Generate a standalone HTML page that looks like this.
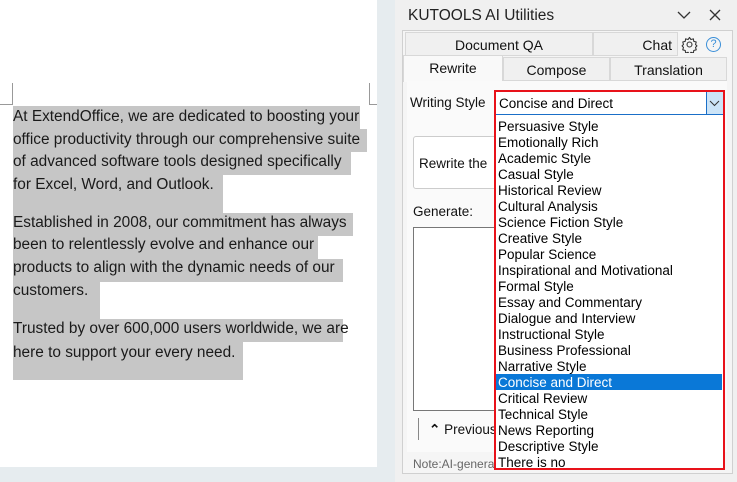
<!DOCTYPE html>
<html><head><style>
*{margin:0;padding:0;box-sizing:border-box}
body{width:737px;height:482px;overflow:hidden;background:#fff;font-family:"Liberation Sans",sans-serif;position:relative}
.a{position:absolute}
.hl{position:absolute;left:13px;background:#c6c6c6;height:23px}
.ln{position:absolute;left:13px;font-size:15.4px;color:#1a1a1a;white-space:nowrap;line-height:23px}
.it{position:absolute;left:2px;font-size:13.5px;line-height:17px;height:16px;color:#000;white-space:nowrap;width:226px;padding-left:2px}
</style></head><body>
<div class="a" style="left:377px;top:0;width:18px;height:482px;background:#e6ecef"></div>
<div class="a" style="left:0;top:467px;width:377px;height:15px;background:#e6ecef"></div>
<div class="a" style="left:12px;top:83px;width:1px;height:22px;background:#999"></div>
<div class="a" style="left:0;top:104px;width:12px;height:1px;background:#999"></div>
<div class="a" style="left:369px;top:83px;width:1px;height:22px;background:#999"></div>
<div class="a" style="left:369px;top:104px;width:8px;height:1px;background:#999"></div>
<div class="hl" style="top:106px;width:347px"></div>
<div class="hl" style="top:129px;width:354px"></div>
<div class="hl" style="top:152px;width:338px"></div>
<div class="hl" style="top:175px;width:210px;height:38px"></div>
<div class="hl" style="top:213px;width:340px"></div>
<div class="hl" style="top:236px;width:305px"></div>
<div class="hl" style="top:259px;width:330px"></div>
<div class="hl" style="top:282px;width:87px;height:37px"></div>
<div class="hl" style="top:319px;width:330px"></div>
<div class="hl" style="top:342px;width:230px;height:38px"></div>
<div class="ln" style="top:105px">At ExtendOffice, we are dedicated to boosting your</div>
<div class="ln" style="top:128px">office productivity through our comprehensive suite</div>
<div class="ln" style="top:150px">of advanced software tools designed specifically</div>
<div class="ln" style="top:173px">for Excel, Word, and Outlook.</div>
<div class="ln" style="top:211px">Established in 2008, our commitment has always</div>
<div class="ln" style="top:233px">been to relentlessly evolve and enhance our</div>
<div class="ln" style="top:256px">products to align with the dynamic needs of our</div>
<div class="ln" style="top:279px">customers.</div>
<div class="ln" style="top:317px">Trusted by over 600,000 users worldwide, we are</div>
<div class="ln" style="top:341px">here to support your every need.</div>

<div class="a" style="left:395px;top:0;width:342px;height:482px;background:#f0f0f0"></div>
<div class="a" style="left:408px;top:7px;font-size:15.5px;color:#222">KUTOOLS AI Utilities</div>
<svg class="a" style="left:677px;top:10px" width="14" height="10"><path d="M1 2l6 6 6-6" stroke="#333" fill="none" stroke-width="1.3"/></svg>
<svg class="a" style="left:709px;top:9px" width="12" height="12"><path d="M1 1l10 10M11 1L1 11" stroke="#333" stroke-width="1.3"/></svg>
<div class="a" style="left:402px;top:30px;width:331px;height:444px;border:1px solid #d0d0d0;background:#f5f5f5"></div>
<div class="a" style="left:405px;top:32px;width:188px;height:24px;border:1px solid #d8d8d8;background:#f0f0f0;font-size:14px;text-align:center;line-height:24px;color:#111">Document QA</div>
<div class="a" style="left:593px;top:32px;width:85px;height:24px;border:1px solid #d8d8d8;background:#f0f0f0;font-size:14px;text-align:right;padding-right:5px;line-height:24px;color:#111">Chat</div>
<svg class="a" style="left:681px;top:36px" width="17" height="17" viewBox="0 0 24 24"><path d="M12 2l2 3 3.5-1 .5 3.5 3.5 1-1 3.5 2 2-2 2 1 3.5-3.5 1-.5 3.5-3.5-1-2 3-2-3-3.5 1-.5-3.5-3.5-1 1-3.5-2-2 2-2-1-3.5 3.5-1 .5-3.5 3.5 1z" fill="none" stroke="#333" stroke-width="1.5" stroke-linejoin="round"/><circle cx="12" cy="12" r="3.5" fill="none" stroke="#333" stroke-width="1.5"/></svg>
<div class="a" style="left:706px;top:37px;width:15px;height:15px;border:1.3px solid #3a8fd8;border-radius:50%;font-size:11px;color:#3a8fd8;text-align:center;line-height:13px">?</div>
<div class="a" style="left:403px;top:55px;width:100px;height:27px;border:1px solid #d8d8d8;border-bottom:none;background:#f9f9f9;font-size:14px;text-align:center;line-height:24px;color:#111">Rewrite</div>
<div class="a" style="left:503px;top:57px;width:107px;height:24px;border:1px solid #d8d8d8;background:#f0f0f0;font-size:14px;text-align:center;line-height:24px;color:#111">Compose</div>
<div class="a" style="left:610px;top:57px;width:117px;height:24px;border:1px solid #d8d8d8;background:#f0f0f0;font-size:14px;text-align:center;line-height:24px;color:#111">Translation</div>
<div class="a" style="left:407px;top:81px;width:320px;height:371px;background:#fafafa"></div>
<div class="a" style="left:410px;top:95px;font-size:13.5px;color:#111">Writing Style</div>
<div class="a" style="left:413px;top:136px;width:90px;height:53px;border:1px solid #ccc;border-radius:3px;background:#fff"></div>
<div class="a" style="left:419px;top:156px;font-size:13.5px;color:#111">Rewrite the</div>
<div class="a" style="left:413px;top:204px;font-size:13.5px;color:#111">Generate:</div>
<div class="a" style="left:413px;top:227px;width:90px;height:184px;border:1px solid #777;background:#fff"></div>
<div class="a" style="left:418px;top:418px;width:1px;height:22px;background:#888"></div>
<div class="a" style="left:429px;top:422px;font-size:13.5px;color:#111"><b>⌃</b> Previous</div>
<div class="a" style="left:413px;top:457px;font-size:12px;color:#666">Note:AI-generated</div>

<div class="a" style="left:494px;top:90px;width:231px;height:380px;border:2px solid #e8121a;background:#fff"></div>
<div class="a" style="left:496px;top:92px;width:227px;height:23px;border-bottom:1px solid #1a6fc8;background:#fff"></div>
<div class="a" style="left:499px;top:96px;font-size:13.5px;color:#000">Concise and Direct</div>
<div class="a" style="left:706px;top:92px;width:17px;height:22px;background:#cce4f7;border-left:1px solid #1a6fc8"></div>
<svg class="a" style="left:709px;top:100px" width="11" height="7"><path d="M1 1l4.5 4.5L10 1" stroke="#333" fill="none"/></svg>
<div class="a" style="left:494px;top:118px;width:231px;height:352px">
<div class="it" style="top:0">Persuasive Style</div>
<div class="it" style="top:16px">Emotionally Rich</div>
<div class="it" style="top:32px">Academic Style</div>
<div class="it" style="top:48px">Casual Style</div>
<div class="it" style="top:64px">Historical Review</div>
<div class="it" style="top:80px">Cultural Analysis</div>
<div class="it" style="top:96px">Science Fiction Style</div>
<div class="it" style="top:112px">Creative Style</div>
<div class="it" style="top:128px">Popular Science</div>
<div class="it" style="top:144px">Inspirational and Motivational</div>
<div class="it" style="top:160px">Formal Style</div>
<div class="it" style="top:176px">Essay and Commentary</div>
<div class="it" style="top:192px">Dialogue and Interview</div>
<div class="it" style="top:208px">Instructional Style</div>
<div class="it" style="top:224px">Business Professional</div>
<div class="it" style="top:240px">Narrative Style</div>
<div class="it" style="top:256px;background:#0a78d7;color:#fff">Concise and Direct</div>
<div class="it" style="top:272px">Critical Review</div>
<div class="it" style="top:288px">Technical Style</div>
<div class="it" style="top:304px">News Reporting</div>
<div class="it" style="top:320px">Descriptive Style</div>
<div class="it" style="top:336px">There is no</div>
</div>
</body></html>
